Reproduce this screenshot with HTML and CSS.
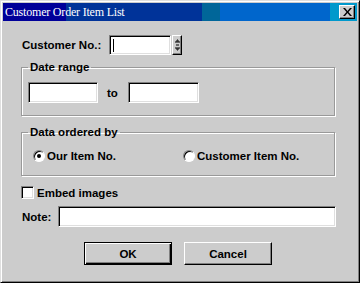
FILE: index.html
```html
<!DOCTYPE html>
<html lang="en">
<head>
    <meta charset="UTF-8">
    <meta name="viewport" content="width=device-width, initial-scale=1.0">
    <title>Customer Order Item List</title>
    <link rel="stylesheet" href="styles.css">
</head>
<body>
    <div class="window">
        <div class="titlebar">
            <span class="title">Customer Order Item List</span>
            <button class="close" type="button">
                <svg width="9" height="8" viewBox="0 0 9 8"><path d="M0 0h2l2.5 3 2.5-3h2L5.5 4 9 8H7L4.5 5 2 8H0l3.5-4z" fill="#000"/></svg>
            </button>
        </div>
        <div class="content">
            <div class="row customer">
                <label class="lbl">Customer No.:</label>
                <div class="sunken cust_field"><span class="caret"></span></div>
                <div class="spin">
                    <svg width="8" height="18" viewBox="0 0 8 18">
                        <path d="M2 6h5M3 5h3M4 4h1" stroke="#000" stroke-width="1"/>
                        <path d="M3 9h3" stroke="#000" stroke-width="1"/>
                        <path d="M2 12h5M3 13h3M4 14h1" stroke="#000" stroke-width="1"/>
                    </svg>
                </div>
            </div>

            <fieldset class="group date">
                <legend>Date range</legend>
                <div class="row">
                    <input class="sunken date_from" type="text">
                    <span class="to">to</span>
                    <input class="sunken date_to" type="text">
                </div>
            </fieldset>

            <fieldset class="group order">
                <legend>Data ordered by</legend>
                <div class="row options">
                    <label class="opt first"><span class="radio checked"></span>Our Item No.</label>
                    <label class="opt"><span class="radio"></span>Customer Item No.</label>
                </div>
            </fieldset>

            <label class="row embed"><span class="check"></span>Embed images</label>

            <div class="row note">
                <label class="lbl note_lbl">Note:</label>
                <input class="sunken note_field" type="text">
            </div>

            <div class="row buttons">
                <button class="btn default" type="button">OK</button>
                <button class="btn" type="button">Cancel</button>
            </div>
        </div>
    </div>
</body>
</html>
```

FILE: styles.css
```css
body { margin: 0; padding: 0; background: #ccc; }
.window { width: 360px; height: 283px; box-sizing: border-box; background: #ccc; border: 1px solid; border-color: #dfdfdf #000 #000 #dfdfdf; box-shadow: inset 1px 1px 0 #fff, inset -1px -1px 0 #808080; padding: 2px; font-family: "Liberation Sans", Arial, sans-serif; font-weight: bold; font-size: 11.5px; color: #000; }

.titlebar { height: 18px; display: flex; align-items: center; justify-content: space-between; padding: 0 2px 0 2px; background: linear-gradient(to right, #000099 0, #000099 63px, #003399 63px, #003399 199px, #006699 199px, #006699 217px, #0066cc 217px, #0066cc 327px, #0099cc 327px); }
.title { color: #fff; font-family: "Liberation Serif", "Times New Roman", serif; font-weight: normal; font-size: 12px; letter-spacing: -0.2px; }
.close { width: 16px; height: 14px; padding: 0; margin: 0; display: flex; align-items: center; justify-content: center; background: #ccc; border: 1px solid; border-color: #fff #000 #000 #fff; box-shadow: inset -1px -1px 0 #808080; }

.content { padding: 14px 0 0 18px; display: flex; flex-direction: column; }
.row { display: flex; align-items: center; }

.sunken { box-sizing: border-box; background: #fff; border: 1px solid; border-color: #808080 #fff #fff #808080; box-shadow: inset 1px 1px 0 #000, inset -1px -1px 0 #dfdfdf; padding: 0; margin: 0; outline: none; font: inherit; }

.lbl { display: block; }
.customer .lbl { width: 87px; padding-left: 1px; }
.cust_field { width: 62px; height: 20px; position: relative; }
.caret { position: absolute; left: 3px; top: 3px; width: 1px; height: 13px; background: #000; }
.spin { width: 10px; height: 20px; margin-left: 1px; box-sizing: border-box; background: #ccc; border: 1px solid; border-color: #fff #000 #000 #fff; box-shadow: inset -1px -1px 0 #808080; display: flex; justify-content: center; }

.group { width: 314px; box-sizing: border-box; margin: 0; border: 1px solid #999; box-shadow: 1px 1px 0 #fff, inset 1px 1px 0 #fff; }
.group legend { padding: 0 2px; margin-left: 0; line-height: 12px; }
.date { margin-top: 6px; padding: 9px 6px 12px 6px; }
.date_from { width: 70px; height: 21px; }
.date_to { width: 71px; height: 21px; }
.to { margin: 0 10px 0 9px; }

.order { margin-top: 10px; padding: 12px 6px 13px 6px; }
.options { padding-left: 5px; }
.opt { display: flex; align-items: center; height: 12px; }
.opt.first { width: 150px; }
.radio { width: 12px; height: 12px; box-sizing: border-box; border-radius: 50%; background: #fff; border: 1px solid; border-color: #808080 #fff #fff #808080; box-shadow: inset 1px 1px 0 #000; margin-right: 2px; position: relative; }
.radio.checked::after { content: ""; position: absolute; left: 3px; top: 3px; width: 4px; height: 4px; border-radius: 50%; background: #000; }

.embed { margin-top: 10px; }
.check { width: 13px; height: 13px; box-sizing: border-box; background: #fff; border: 1px solid; border-color: #808080 #fff #fff #808080; box-shadow: inset 1px 1px 0 #000, inset -1px -1px 0 #dfdfdf; margin-right: 3px; }

.note { margin-top: 7px; }
.note_lbl { width: 36px; padding-left: 1px; }
.note_field { width: 278px; height: 21px; }

.buttons { margin-top: 15px; margin-left: 63px; gap: 12px; }
.btn { width: 88px; height: 23px; box-sizing: border-box; padding: 0; background: #ccc; font: inherit; color: #000; border: 1px solid; border-color: #fff #000 #000 #fff; box-shadow: inset -1px -1px 0 #808080; }
.btn.default { border: 1px solid #000; box-shadow: inset 1px 1px 0 #fff, inset -1px -1px 0 #000, inset -2px -2px 0 #808080; }
```
